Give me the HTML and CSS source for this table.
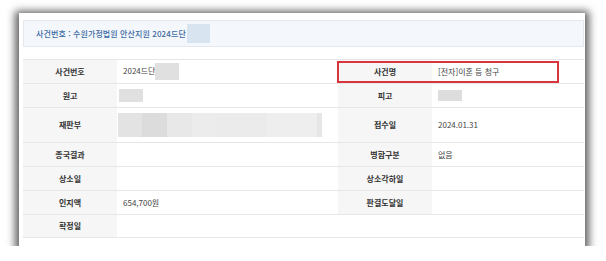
FILE: index.html
```html
<!DOCTYPE html>
<html lang="ko">
<head>
<meta charset="utf-8">
<link rel="stylesheet" href="styles.css">
</head>
<body>
<div class="card">
  <div class="case-head">
    <span class="case-title">사건번호 : 수원가정법원 안산지원 2024드단</span>
    <span class="mask-blue"></span>
  </div>
  <table class="info">
    <colgroup>
      <col class="c-label"><col class="c-val"><col class="c-label"><col>
    </colgroup>
    <tr class="r-std">
      <th>사건번호</th>
      <td>2024드단<span class="mask m-num"></span></td>
      <th>사건명</th>
      <td>[전자]이혼 등 청구</td>
    </tr>
    <tr class="r-std">
      <th>원고</th>
      <td><span class="mask m-party"></span></td>
      <th>피고</th>
      <td><span class="mask m-party2"></span></td>
    </tr>
    <tr class="r-tall">
      <th>재판부</th>
      <td class="blur-cell">
        <div class="mask-bar">
          <span class="seg s1"></span><span class="seg s2"></span><span class="seg s3"></span><span class="seg s4"></span><span class="seg s5"></span><span class="seg s6"></span><span class="seg s7"></span>
        </div>
      </td>
      <th>접수일</th>
      <td>2024.01.31</td>
    </tr>
    <tr class="r-std">
      <th>종국결과</th>
      <td></td>
      <th>병합구분</th>
      <td>없음</td>
    </tr>
    <tr class="r-std">
      <th>상소일</th>
      <td></td>
      <th>상소각하일</th>
      <td></td>
    </tr>
    <tr class="r-std">
      <th>인지액</th>
      <td>654,700원</td>
      <th>판결도달일</th>
      <td></td>
    </tr>
    <tr class="r-last">
      <th>확정일</th>
      <td colspan="3"></td>
    </tr>
  </table>
  <div class="highlight"></div>
</div>
</body>
</html>
```

FILE: styles.css
```css
html, body {
  margin: 0;
  padding: 0;
  background: #ffffff;
}
body {
  font-family: "Noto Sans CJK KR", "Noto Sans", sans-serif;
  font-size: 8px;
  color: #444444;
  padding: 13px 0 0 19px;
}
.card {
  position: relative;
  box-sizing: border-box;
  width: 566px;
  height: 233px;
  background: #ffffff;
  padding: 7px 1px 0 4px;
  box-shadow: 0 2px 8px 4px rgba(0, 0, 0, 0.62);
}
.case-head {
  box-sizing: border-box;
  height: 27px;
  display: flex;
  align-items: center;
  padding-left: 12px;
  background: #f4f7fb;
  border: 1px solid #e4e9f0;
  margin-bottom: 12px;
}
.case-title {
  color: #3a6aa3;
  font-weight: 500;
  letter-spacing: 0.1px;
}
.mask-blue {
  display: inline-block;
  width: 23px;
  height: 19px;
  margin-left: 1px;
  background: #d9e4f1;
}
.info {
  width: 561px;
  border-collapse: collapse;
  table-layout: fixed;
}
.c-label { width: 94px; }
.c-val { width: 221px; }
.info th, .info td {
  padding: 0 0 0 6px;
  border-top: 1px solid #e6e6e6;
  vertical-align: middle;
  text-align: left;
  line-height: 10px;
}
.info th {
  padding: 0;
  text-align: center;
  background: #f6f6f6;
  color: #333333;
  font-weight: 600;
}
.info td {
  color: #444444;
  font-weight: 400;
}
.r-std th, .r-std td { height: 23px; }
.r-tall th, .r-tall td { height: 34px; }
.r-last th, .r-last td { height: 22px; border-bottom: 1px solid #e6e6e6; }
.mask {
  display: inline-block;
  vertical-align: middle;
  background: #e0e0e0;
}
.m-num { width: 24px; height: 17px; }
.m-party { width: 24px; height: 13px; margin-left: -4px; }
.m-party2 { width: 24px; height: 11px; background: #dddddd; }
.info .blur-cell { padding-left: 1px; }
.mask-bar {
  display: flex;
  width: 204px;
  height: 24px;
}
.seg { display: block; height: 100%; }
.s1 { width: 24px; background: #e3e3e3; }
.s2 { width: 25px; background: #dcdcdc; }
.s3 { width: 25px; background: #e8e8e8; }
.s4 { width: 24px; background: #ececec; }
.s5 { width: 51px; background: #ebebeb; }
.s6 { width: 50px; background: #eeeeee; }
.s7 { width: 5px; background: #e6e6e6; }
.highlight {
  position: absolute;
  left: 318px;
  top: 48px;
  width: 222px;
  height: 22px;
  box-sizing: border-box;
  border: 2px solid #d8363e;
}
```
